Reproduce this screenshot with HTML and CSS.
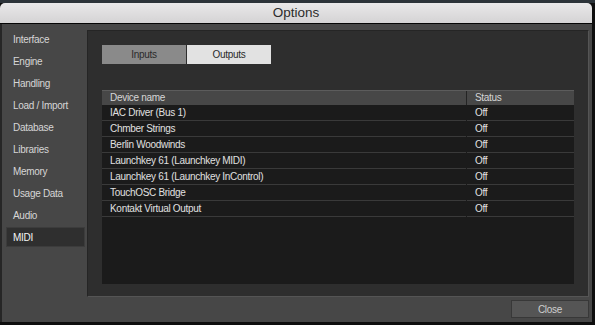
FILE: index.html
```html
<!DOCTYPE html>
<html lang="en">
<head>
<meta charset="utf-8">
<title>Options</title>
<link rel="stylesheet" href="styles.css">
</head>
<body>
<div class="desktop-strip"></div>
<div class="window">
  <div class="titlebar">Options</div>
  <div class="content">
    <nav class="sidebar">
      <div class="nav-item">Interface</div>
      <div class="nav-item">Engine</div>
      <div class="nav-item">Handling</div>
      <div class="nav-item">Load / Import</div>
      <div class="nav-item">Database</div>
      <div class="nav-item">Libraries</div>
      <div class="nav-item">Memory</div>
      <div class="nav-item">Usage Data</div>
      <div class="nav-item">Audio</div>
      <div class="nav-item active">MIDI</div>
    </nav>
    <div class="main">
      <section class="panel">
        <div class="tabs">
          <div class="tab">Inputs</div>
          <div class="tab selected">Outputs</div>
        </div>
        <div class="table">
          <div class="head">
            <div class="cell">Device name</div>
            <div class="cell">Status</div>
          </div>
          <div class="row"><div class="cell">IAC Driver (Bus 1)</div><div class="cell">Off</div></div>
          <div class="row"><div class="cell">Chmber Strings</div><div class="cell">Off</div></div>
          <div class="row"><div class="cell">Berlin Woodwinds</div><div class="cell">Off</div></div>
          <div class="row"><div class="cell">Launchkey 61 (Launchkey MIDI)</div><div class="cell">Off</div></div>
          <div class="row"><div class="cell">Launchkey 61 (Launchkey InControl)</div><div class="cell">Off</div></div>
          <div class="row"><div class="cell">TouchOSC Bridge</div><div class="cell">Off</div></div>
          <div class="row"><div class="cell">Kontakt Virtual Output</div><div class="cell">Off</div></div>
        </div>
      </section>
      <div class="footer">
        <button class="close">Close</button>
      </div>
    </div>
  </div>
</div>
</body>
</html>
```

FILE: styles.css
```css
* { box-sizing: border-box; }

html, body {
  margin: 0;
  padding: 0;
  background: #0e0e0e;
  width: 595px;
  height: 325px;
  overflow: hidden;
}

body {
  font-family: "Liberation Sans", Arial, sans-serif;
  font-size: 10px;
  letter-spacing: -0.3px;
}

.desktop-strip {
  height: 3px;
  background: #2c3339;
}

.window {
  width: 592px;
  height: 319px;
  display: flex;
  flex-direction: column;
}

.titlebar {
  height: 21px;
  border-radius: 5px 5px 0 0;
  background: linear-gradient(#e9e8e9, #d4d3d4);
  border-bottom: 1px solid #050505;
  color: #2c2c2c;
  font-size: 13.5px;
  letter-spacing: 0;
  line-height: 20px;
  text-align: center;
}

.content {
  flex: 1;
  display: flex;
  background: #474747;
  border-left: 2px solid #262626;
}

.sidebar {
  width: 85px;
  padding: 5px 2px 0 4px;
  display: flex;
  flex-direction: column;
  gap: 2px;
}

.nav-item {
  height: 20px;
  line-height: 20px;
  padding-left: 6px;
  color: #d6d6d6;
  border: 1px solid transparent;
}

.nav-item.active {
  background: #2f2f2f;
  border-color: #3c3c3c;
  color: #f4f4f4;
}

.main {
  flex: 1;
  display: flex;
  flex-direction: column;
  padding: 6px 3px 0 0;
}

.panel {
  height: 267px;
  background: #2e2e2e;
  border: 1px solid #252525;
  border-right-color: #555;
  border-bottom-color: #555;
  padding: 14px 14px 12px 14px;
  display: flex;
  flex-direction: column;
}

.tabs {
  display: flex;
  gap: 1px;
  height: 19px;
}

.tab {
  width: 84px;
  line-height: 19px;
  text-align: center;
  color: #2a2a2a;
  background: #8a8a8a;
}

.tab.selected {
  background: #e2e2e2;
}

.table {
  margin-top: 26px;
  flex: 1;
  background: #1b1b1b;
}

.head, .row {
  display: grid;
  grid-template-columns: 364px 1fr;
  column-gap: 1px;
}

.head {
  background: #242424;
  border-top: 1px solid #5c5c5c;
}

.head .cell {
  height: 14px;
  line-height: 14px;
  background: #474747;
  color: #d6d6d6;
}

.cell {
  padding-left: 8px;
  white-space: nowrap;
}

.row .cell {
  height: 16px;
  line-height: 15px;
  color: #e0e0e0;
  border-bottom: 1px solid #3a3a3a;
}

.footer {
  display: flex;
  justify-content: flex-end;
  padding-top: 3px;
}

.close {
  width: 78px;
  height: 18px;
  margin: 0;
  padding: 0;
  font: inherit;
  letter-spacing: inherit;
  color: #cfcfcf;
  background: #555555;
  border: 1px solid #383838;
}
```
